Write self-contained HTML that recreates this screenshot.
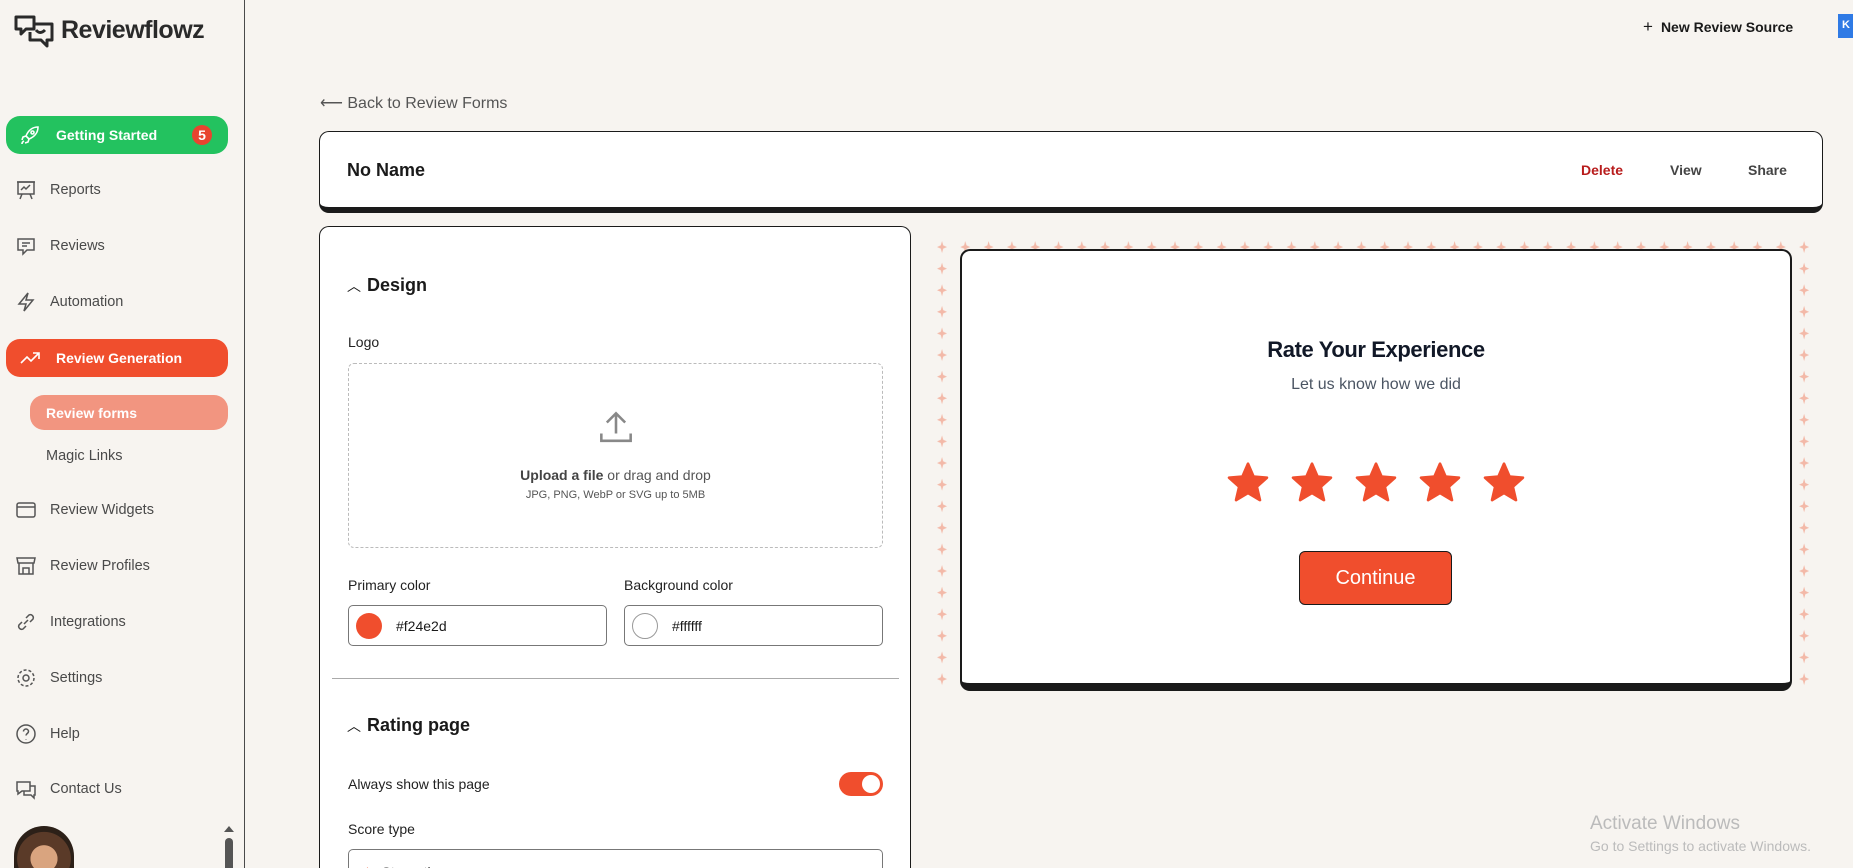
<!DOCTYPE html>
<html style="width:1853px;height:868px;overflow:hidden"><head><meta charset="utf-8"><style>
*{box-sizing:border-box;margin:0;padding:0}
body{width:1853px;height:868px;overflow:hidden;background:#f7f4f0;font-family:"Liberation Sans",Arial,sans-serif;color:#1a1a1a;position:relative}
.abs{position:absolute}
.side{position:absolute;left:0;top:0;width:245px;height:868px;border-right:1.5px solid #4a4a4a;overflow:hidden}
.nav{position:absolute;left:14px;font-size:14.5px;color:#4a4a4a;display:flex;align-items:center;gap:0}
.nav svg{width:24px;height:24px;margin-right:12px}
.pill{position:absolute;left:6px;width:222px;height:38px;border-radius:14px;color:#fff;font-weight:bold;font-size:14px;display:flex;align-items:center;padding-left:12px}
.pill svg{width:24px;height:24px;margin-right:14px}
.card{position:absolute;background:#fff;border:1.5px solid #1a1a1a;border-radius:10px}
.lbl{position:absolute;font-size:14px;color:#222}
.inp{position:absolute;height:41px;border:1.3px solid #777;border-radius:5px;background:#fff;font-size:14px;display:flex;align-items:center;overflow:hidden}
</style></head><body>
<div class="side">
 <svg class="abs" style="left:14px;top:14px" width="42" height="34" viewBox="0 0 42 34" fill="none" stroke="#2a2a2a" stroke-width="3" stroke-linejoin="round"><path d="M2 3h18v12h-8l-5 5v-5H2z"/><path d="M20 10h18v16h-5v6l-6-6H16v-8"/><path d="M22 16q4 5 9 0"/></svg>
 <div class="abs" style="left:61px;top:16px;font-size:25px;font-weight:bold;color:#2a2a2a;letter-spacing:-0.5px">Reviewflowz</div>
 <div class="pill" style="top:116px;background:#23c25f"><svg viewBox="0 0 24 24" fill="none" stroke="#fff" stroke-width="1.6"><path d="M20 4c-6 0-10 4-12 9l3 3c5-2 9-6 9-12z"/><circle cx="14.5" cy="9.5" r="1.5"/><path d="M8 13l-3 1-1 3M11 16l-1 3-3 1M6 18q-2 1-2 3"/></svg>Getting Started<span style="position:absolute;right:16px;width:20px;height:20px;border-radius:50%;background:#e8442f;font-size:14px;display:flex;align-items:center;justify-content:center">5</span></div>
 <div class="nav" style="top:178px"><svg viewBox="0 0 24 24" fill="none" stroke="#555" stroke-width="1.5"><rect x="4" y="4" width="16" height="12"/><path d="M3 4h18M7 12l3-3 2 2 4-4M8 16l-2 5M16 16l2 5"/></svg>Reports</div>
 <div class="nav" style="top:234px"><svg viewBox="0 0 24 24" fill="none" stroke="#555" stroke-width="1.5"><path d="M4 5h16v11h-7l-4 4v-4H4z"/><path d="M8 9h8M8 12h5"/></svg>Reviews</div>
 <div class="nav" style="top:290px"><svg viewBox="0 0 24 24" fill="none" stroke="#555" stroke-width="1.5"><path d="M14 3L5 14h7l-2 7 9-11h-7z"/></svg>Automation</div>
 <div class="pill" style="top:339px;background:#f04e2d"><svg viewBox="0 0 24 24" fill="none" stroke="#fff" stroke-width="1.6"><path d="M3 17l6-6 4 4 8-8M15 7h6v6"/></svg>Review Generation</div>
 <div class="pill" style="top:395px;left:30px;width:198px;height:35px;background:#f29580;padding-left:16px">Review forms</div>
 <div class="nav" style="top:448px;left:46px">Magic Links</div>
 <div class="nav" style="top:498px"><svg viewBox="0 0 24 24" fill="none" stroke="#555" stroke-width="1.5"><rect x="3" y="5" width="18" height="14" rx="2"/><path d="M3 9h18"/></svg>Review Widgets</div>
 <div class="nav" style="top:554px"><svg viewBox="0 0 24 24" fill="none" stroke="#555" stroke-width="1.5"><path d="M3 4h18l-1 5H4zM5 9v11h14V9M9 20v-6h6v6"/></svg>Review Profiles</div>
 <div class="nav" style="top:610px"><svg viewBox="0 0 24 24" fill="none" stroke="#555" stroke-width="1.5"><path d="M10 14l4-4M8 12l-3 3a3 3 0 004 4l3-3M16 12l3-3a3 3 0 00-4-4l-3 3"/></svg>Integrations</div>
 <div class="nav" style="top:666px"><svg viewBox="0 0 24 24" fill="none" stroke="#555" stroke-width="1.5"><circle cx="12" cy="12" r="3"/><circle cx="12" cy="12" r="8" stroke-dasharray="3 2"/></svg>Settings</div>
 <div class="nav" style="top:722px"><svg viewBox="0 0 24 24" fill="none" stroke="#555" stroke-width="1.5"><circle cx="12" cy="12" r="9"/><path d="M9.5 9.5a2.5 2.5 0 115 0c0 2-2.5 2-2.5 4M12 17v.5"/></svg>Help</div>
 <div class="nav" style="top:777px"><svg viewBox="0 0 24 24" fill="none" stroke="#555" stroke-width="1.5"><path d="M3 5h13v9H8l-4 3v-3H3zM16 9h5v9h-1v3l-3-3h-7v-4"/></svg>Contact Us</div>
 <div class="abs" style="left:14px;top:826px;width:60px;height:42px;border-radius:30px 30px 0 0;background:radial-gradient(circle at 50% 78%,#d9a47f 0 30%,#5a3a28 31% 60%,#2c2018 61%)"></div>
 <div class="abs" style="left:225px;top:838px;width:8px;height:30px;border-radius:4px 4px 0 0;background:#555"></div>
 <div class="abs" style="left:224px;top:826px;width:0;height:0;border-left:5px solid transparent;border-right:5px solid transparent;border-bottom:6px solid #555"></div>
</div>
<div class="abs" style="left:1643px;top:17px;font-size:14px;font-weight:bold;color:#1a1a1a"><span style="font-weight:normal;font-size:17px;margin-right:8px">+</span>New Review Source</div>
<div class="abs" style="left:1838px;top:14px;width:15px;height:24px;background:#2f7ae5;color:#fff;font-size:11px;font-weight:bold;padding:5px 0 0 4px">K</div>
<div class="abs" style="left:320px;top:93px;font-size:16px;color:#555">⟵ Back to Review Forms</div>
<div class="card" style="left:319px;top:131px;width:1504px;height:82px;border-bottom:6px solid #1a1a1a">
 <div class="abs" style="left:27px;top:28px;font-size:18px;font-weight:bold">No Name</div>
 <div class="abs" style="left:1261px;top:30px;font-size:14px;font-weight:bold;color:#b81c1c">Delete</div>
 <div class="abs" style="left:1350px;top:30px;font-size:14px;font-weight:bold;color:#444">View</div>
 <div class="abs" style="left:1428px;top:30px;font-size:14px;font-weight:bold;color:#444">Share</div>
</div>
<div class="card" style="left:319px;top:226px;width:592px;height:642px;border-bottom:none;border-radius:10px 10px 0 0;overflow:hidden">
 <div class="abs" style="left:27px;top:48px;font-size:18px;font-weight:bold"><span style="font-weight:normal;font-size:14px;margin-right:6px">︿</span>Design</div>
 <div class="lbl" style="left:28px;top:107px">Logo</div>
 <div class="abs" style="left:28px;top:136px;width:535px;height:185px;border:1.3px dashed #bbb;border-radius:6px;text-align:center">
  <svg style="margin-top:42px" width="44" height="44" viewBox="0 0 24 24" fill="none" stroke="#888" stroke-width="1.4"><path d="M12 15V4M7 9l5-5 5 5M4 15v4h16v-4"/></svg>
  <div style="font-size:14px;color:#555;margin-top:12px"><b style="color:#444">Upload a file</b> or drag and drop</div>
  <div style="font-size:11px;color:#555;margin-top:6px">JPG, PNG, WebP or SVG up to 5MB</div>
 </div>
 <div class="lbl" style="left:28px;top:350px">Primary color</div>
 <div class="lbl" style="left:304px;top:350px">Background color</div>
 <div class="inp" style="left:28px;top:378px;width:259px"><span style="width:26px;height:26px;border-radius:50%;background:#f04e2d;margin:0 14px 0 7px"></span>#f24e2d</div>
 <div class="inp" style="left:304px;top:378px;width:259px"><span style="width:26px;height:26px;border-radius:50%;border:1px solid #999;margin:0 14px 0 7px"></span>#ffffff</div>
 <div class="abs" style="left:12px;top:451px;width:567px;height:1px;background:#aaa"></div>
 <div class="abs" style="left:27px;top:488px;font-size:18px;font-weight:bold"><span style="font-weight:normal;font-size:14px;margin-right:6px">︿</span>Rating page</div>
 <div class="lbl" style="left:28px;top:549px">Always show this page</div>
 <div class="abs" style="left:519px;top:545px;width:44px;height:24px;border-radius:12px;background:#f04e2d"><span class="abs" style="right:3px;top:3px;width:18px;height:18px;border-radius:50%;background:#fff"></span></div>
 <div class="lbl" style="left:28px;top:594px">Score type</div>
 <div class="inp" style="left:28px;top:622px;width:535px;height:30px;padding:14px 0 0 12px;align-items:flex-start;color:#333;border-bottom:none;border-radius:5px 5px 0 0"><span style="color:#f04e2d;margin-right:8px">★</span>Star rating</div>
</div>
<svg class="abs" style="left:930px;top:236px" width="890" height="455">
 <defs><pattern id="p" width="23.3" height="21.6" patternUnits="userSpaceOnUse"><path d="M12 5l1.2 4.3L17 11l-3.8 1.7L12 17l-1.2-4.3L7 11l3.8-1.7z" fill="#f3b9a8"/></pattern></defs>
 <rect width="890" height="455" fill="url(#p)"/>
</svg>
<div class="card" style="left:960px;top:249px;width:832px;height:442px;border-width:2px;border-bottom:8px solid #1a1a1a">
 <div class="abs" style="left:0;width:100%;top:86px;text-align:center;font-size:22px;font-weight:bold;color:#111827;letter-spacing:-0.4px">Rate Your Experience</div>
 <div class="abs" style="left:0;width:100%;top:125px;text-align:center;font-size:16px;color:#4b5563">Let us know how we did</div>
 <div class="abs" style="left:264px;top:210px;display:flex;gap:20px">
  <svg width="44" height="44" viewBox="0 0 24 24"><path id="s" d="M12 1.5l3 7 7.3.6-5.5 4.9 1.7 7.3L12 17.4l-6.5 3.9 1.7-7.3L1.7 9.1 9 8.5z" fill="#f04e2d" stroke="#f04e2d" stroke-width="1.5" stroke-linejoin="round"/></svg>
  <svg width="44" height="44" viewBox="0 0 24 24"><use href="#s"/></svg>
  <svg width="44" height="44" viewBox="0 0 24 24"><use href="#s"/></svg>
  <svg width="44" height="44" viewBox="0 0 24 24"><use href="#s"/></svg>
  <svg width="44" height="44" viewBox="0 0 24 24"><use href="#s"/></svg>
 </div>
 <div class="abs" style="left:337px;top:300px;width:153px;height:54px;background:#f04e2d;border:1.3px solid #1a1a1a;border-radius:6px;color:#fff;font-size:20px;display:flex;align-items:center;justify-content:center">Continue</div>
</div>
<div class="abs" style="left:1590px;top:813px;font-size:19px;color:#bbb">Activate Windows</div>
<div class="abs" style="left:1590px;top:838px;font-size:14px;color:#bbb">Go to Settings to activate Windows.</div>
</body></html>
